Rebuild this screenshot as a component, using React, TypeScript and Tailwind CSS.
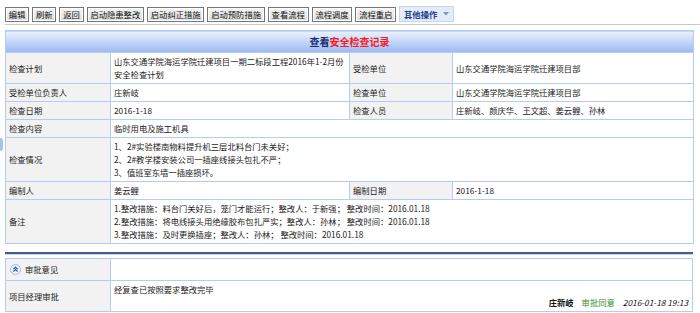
import React from 'react'

const font = { fontFamily: '"Noto Sans CJK SC", "Noto Sans", sans-serif' }

const buttons = ['编辑', '刷新', '返回', '启动隐患整改', '启动纠正措施', '启动预防措施', '查看流程', '流程调度', '流程重启']

const lab = 'border border-[#b7caf3] bg-[#f2f2f2] px-[3px] py-[2px] align-middle text-left font-normal'
const val = 'border border-[#b7caf3] bg-white px-[3px] py-[2px] align-middle'

export default function App() {
  return (
    <div className="relative w-[700px] h-[313px] overflow-hidden bg-white text-[8.3px] leading-[13px] text-[#222]" style={font}>
      {/* left edge handle */}
      <div className="absolute left-0 top-[138px] w-[3px] h-[13px] rounded-r-sm bg-[#a9c1ea]" />

      {/* toolbar */}
      <div className="flex items-center gap-[3px] ml-[5px] pt-[5px] h-[25px] border-b border-[#c9c9c9]">
        {buttons.map((b) => (
          <button
            key={b}
            className="h-[15px] px-[2.8px] border border-[#767676] bg-gradient-to-b from-[#f6f6f6] to-[#dedede] text-[#111] leading-[13px] shadow-[inset_0_0_0_1px_#ffffff]"
          >
            {b}
          </button>
        ))}
        <button className="h-[16px] -mt-[1px] w-[55px] flex items-center justify-center gap-[6px] border border-[#c6d6ef] bg-[#e4ecf9] text-[#1d3c8e] font-semibold leading-[13px]">
          其他操作
          <svg width="6" height="4" viewBox="0 0 6 4"><path d="M0 0h6L3 3.5z" fill="#7a97c8" /></svg>
        </button>
      </div>

      {/* main table */}
      <table className="ml-[5px] mt-[5px] w-[688px] table-fixed border-collapse">
        <colgroup>
          <col className="w-[105px]" />
          <col className="w-[239px]" />
          <col className="w-[103px]" />
          <col className="w-[241px]" />
        </colgroup>
        <tbody>
          <tr>
            <td colSpan={4} className="h-[22px] border border-[#b7caf3] bg-gradient-to-b from-[#eaf1fe] to-[#9bb9f2] text-center font-bold text-[10px]">
              <span className="text-[#1b2d6e]">查看</span>
              <span className="text-[#ff1a1a]">安全检查记录</span>
            </td>
          </tr>
          <tr>
            <th className={lab}>检查计划</th>
            <td className={val + ' whitespace-nowrap'}>
              山东交通学院海运学院迁建项目一期二标段工程2016年1-2月份
              <br />
              安全检查计划
            </td>
            <th className={lab}>受检单位</th>
            <td className={val}>山东交通学院海运学院迁建项目部</td>
          </tr>
          <tr>
            <th className={lab}>受检单位负责人</th>
            <td className={val}>庄新岐</td>
            <th className={lab}>检查单位</th>
            <td className={val}>山东交通学院海运学院迁建项目部</td>
          </tr>
          <tr>
            <th className={lab}>检查日期</th>
            <td className={val}>2016-1-18</td>
            <th className={lab}>检查人员</th>
            <td className={val}>庄新岐、颜庆华、王文超、姜云鲤、孙林</td>
          </tr>
          <tr>
            <th className={lab}>检查内容</th>
            <td colSpan={3} className={val}>临时用电及施工机具</td>
          </tr>
          <tr>
            <th className={lab}>检查情况</th>
            <td colSpan={3} className={val}>
              <div>1、2#实验楼南物料提升机三层北料台门未关好；</div>
              <div>2、2#教学楼安装公司一插座线接头包扎不严；</div>
              <div>3、值班室东墙一插座损坏。</div>
            </td>
          </tr>
          <tr>
            <th className={lab}>编制人</th>
            <td className={val}>姜云鲤</td>
            <th className={lab}>编制日期</th>
            <td className={val}>2016-1-18</td>
          </tr>
          <tr>
            <th className={lab}>备注</th>
            <td colSpan={3} className={val + ' whitespace-nowrap'}>
              <div>1.整改措施：料台门关好后，笼门才能运行；整改人：于新强； 整改时间：2016.01.18</div>
              <div>2.整改措施：将电线接头用绝缘胶布包扎严实；整改人：孙林； 整改时间：2016.01.18</div>
              <div>3.整改措施：及时更换插座；整改人：孙林； 整改时间：2016.01.18</div>
            </td>
          </tr>
        </tbody>
      </table>

      {/* separator */}
      <div className="ml-[5px] mt-[8px] w-[688px] h-[2px] bg-[#3f5c98]" />
      <div className="ml-[5px] w-[688px] h-[1px] bg-[#d4d4d4]" />

      {/* approval table */}
      <table className="ml-[5px] mt-[3px] w-[688px] table-fixed border-collapse">
        <colgroup>
          <col className="w-[105px]" />
          <col />
        </colgroup>
        <tbody>
          <tr>
            <th className={lab + ' h-[22px]'}>
              <div className="flex items-center gap-[4px] pl-[1px]">
                <svg width="11" height="11" viewBox="0 0 11 11">
                  <circle cx="5.5" cy="5.5" r="5" fill="#eef3fc" stroke="#9cb4de" strokeWidth="0.9" />
                  <path d="M3.4 5.2 5.5 3.2 7.6 5.2M3.4 7.6 5.5 5.6 7.6 7.6" fill="none" stroke="#2d5fb8" strokeWidth="1.2" />
                </svg>
                审批意见
              </div>
            </th>
            <td className={val}></td>
          </tr>
          <tr>
            <th className={lab + ' h-[29px]'}>项目经理审批</th>
            <td className={val + ' align-top py-[1px]'}>
              <div>经复查已按照要求整改完毕</div>
              <div className="flex justify-end gap-[8px] pr-[1px]">
                <span className="font-bold text-[#111]">庄新岐</span>
                <span className="text-[#2f8f2f]">审批同意</span>
                <span className="italic text-[#111]">2016-01-18 19:13</span>
              </div>
            </td>
          </tr>
        </tbody>
      </table>
    </div>
  )
}
